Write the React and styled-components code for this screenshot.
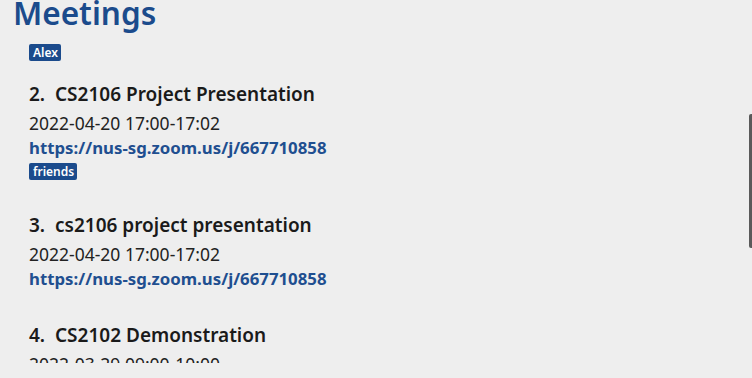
import React from "react";
import styled, { createGlobalStyle } from "styled-components";

const Global = createGlobalStyle`
  html, body { margin: 0; padding: 0; }
  body {
    background: #eeeeee;
    font-family: "Noto Sans", "Open Sans", sans-serif;
    width: 752px;
    height: 378px;
    overflow: hidden;
  }
`;

const Page = styled.div`
  position: relative;
  display: flex;
  flex-direction: column;
  box-sizing: border-box;
  width: 752px;
  height: 378px;
  padding-bottom: 15px;
  overflow: hidden;
  background: #eeeeee;
`;

const Heading = styled.h1`
  flex: none;
  margin: -12px 0 6px 13px;
  font-size: 31.5px;
  line-height: 50px;
  font-weight: 600;
  color: #1b4b8c;
`;

const List = styled.div`
  flex: 1;
  min-height: 0;
  overflow: hidden;
  display: flex;
  flex-direction: column;
  padding-left: 29px;
`;

const Card = styled.div`
  flex: none;
  display: flex;
  flex-direction: column;
  padding-bottom: ${(p) => p.$gap}px;
`;

const Title = styled.div`
  font-size: 19px;
  line-height: 25px;
  font-weight: 600;
  color: #1a1a1a;
  white-space: pre;
`;

const DateLine = styled.div`
  margin-top: 4px;
  font-size: 17.5px;
  line-height: 24px;
  color: #222222;
`;

const Link = styled.div`
  font-size: 16.8px;
  line-height: 25px;
  font-weight: 700;
  color: #1f4f90;
`;

const Tags = styled.div`
  display: flex;
  gap: 4px;
  height: 17px;
  margin-top: ${(p) => p.$top}px;
`;

const Tag = styled.span`
  display: block;
  height: 17px;
  line-height: 17px;
  padding: 0 3px 0 4px;
  border-radius: 2px;
  background: #1b4b8c;
  color: #ffffff;
  font-size: 12px;
  font-weight: 600;
`;

const Scrollbar = styled.div`
  position: absolute;
  right: 0;
  top: 114px;
  width: 3px;
  height: 134px;
  border-radius: 2px 0 0 2px;
  background: #5a5a5a;
`;

const meetings = [
  { id: 2, title: "CS2106 Project Presentation", time: "2022-04-20 17:00-17:02", link: "https://nus-sg.zoom.us/j/667710858", tags: ["friends"] },
  { id: 3, title: "cs2106 project presentation", time: "2022-04-20 17:00-17:02", link: "https://nus-sg.zoom.us/j/667710858", tags: [] },
  { id: 4, title: "CS2102 Demonstration", time: "2022-03-29 09:00-10:00", link: "https://nus-sg.zoom.us/j/667710858", tags: [] },
];

export default function App() {
  return (
    <Page>
      <Global />
      <Heading>Meetings</Heading>
      <List>
        <Card $gap={21}>
          <Tags $top={0}>
            <Tag>Alex</Tag>
          </Tags>
        </Card>
        {meetings.map((m) => (
          <Card key={m.id} $gap={m.tags.length > 0 ? 33 : 32}>
            <Title>{`${m.id}.  ${m.title}`}</Title>
            <DateLine>{m.time}</DateLine>
            <Link>{m.link}</Link>
            {m.tags.length > 0 && (
              <Tags $top={3}>
                {m.tags.map((t) => (
                  <Tag key={t}>{t}</Tag>
                ))}
              </Tags>
            )}
          </Card>
        ))}
      </List>
      <Scrollbar />
    </Page>
  );
}
